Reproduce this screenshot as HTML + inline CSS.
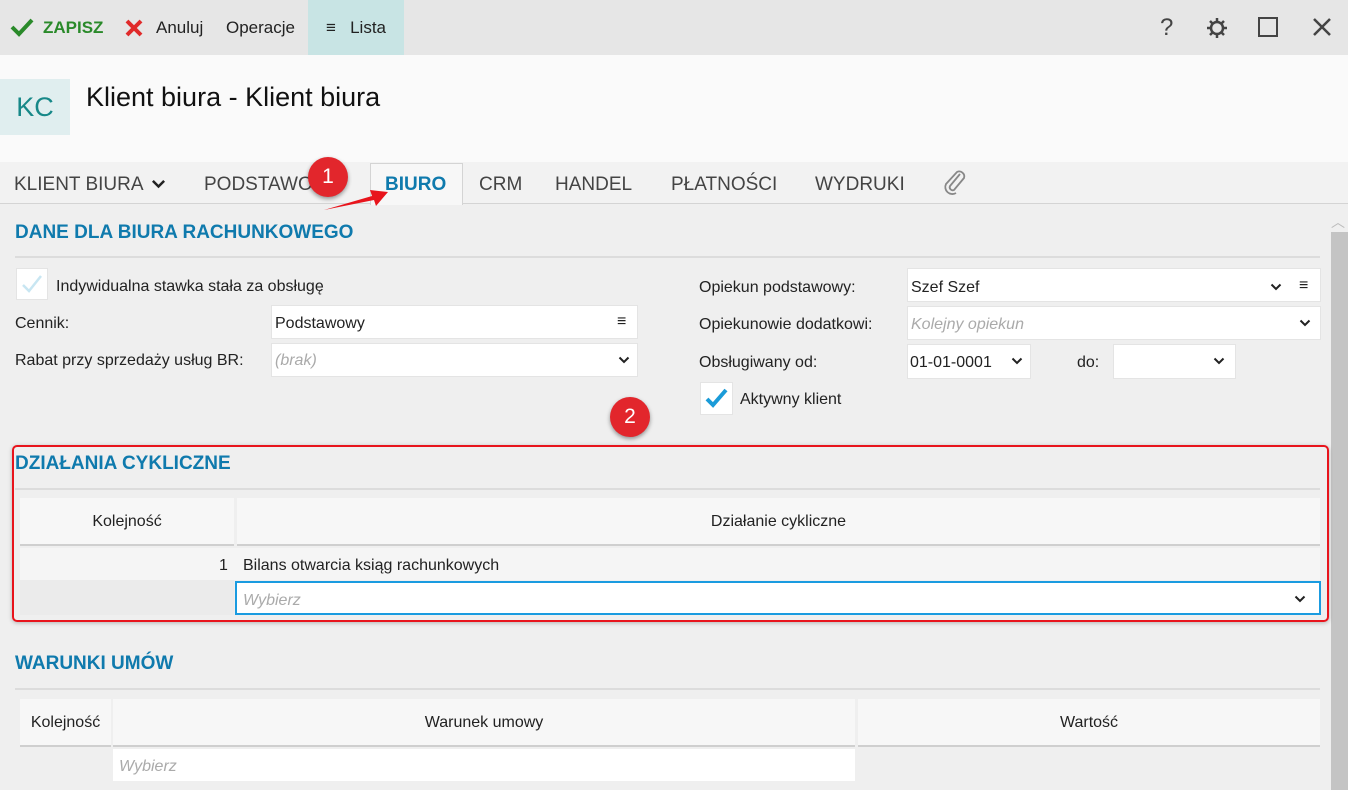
<!DOCTYPE html>
<html><head><meta charset="utf-8"><style>
*{box-sizing:border-box;margin:0;padding:0}
body{width:1348px;height:790px;overflow:hidden;background:#efefef;font-family:"Liberation Sans",sans-serif;font-size:16px;color:#222;position:relative}
.a{position:absolute}
.tb{left:0;top:0;width:1348px;height:55px;background:#e6e6e6}
.hd{left:0;top:55px;width:1348px;height:107px;background:#fafafa}
.tabs{left:0;top:162px;width:1348px;height:42px;background:#f2f2f2;border-bottom:1px solid #d4d4d4}
.tab{top:174px;font-size:19px;color:#444}
.h2{font-size:19px;font-weight:bold;color:#0f7aad;left:15px}
.ln{height:2px;background:#dcdcdc;left:15px}
.in{background:#fff;border:1px solid #e4e4e4}
.ph{color:#aaa;font-style:italic}
.th{background:#f7f7f7;border-bottom:2px solid #cfcfcf;text-align:center;line-height:48px}
.badge{width:40px;height:40px;border-radius:50%;background:#e2262c;color:#fff;text-align:center;line-height:40px;font-size:21px;box-shadow:0 2px 4px rgba(0,0,0,.4)}
</style></head><body>
<svg width="0" height="0" style="position:absolute"><defs><symbol id="cv" viewBox="0 0 12 8"><path d="M1.5 1.5L6 6l4.5-4.5" stroke="#222" stroke-width="2" fill="none"/></symbol></defs></svg>
<div class="a tb"></div>
<svg class="a" style="left:10px;top:17px" width="24" height="20"><path d="M2 10l7 7L22 3" stroke="#2a8a2a" stroke-width="4" fill="none"/></svg>
<div class="a" style="left:43px;top:18px;color:#2a8a2a;font-weight:bold;font-size:17px">ZAPISZ</div>
<svg class="a" style="left:124px;top:18px" width="20" height="20"><path d="M3 3l14 14M17 3L3 17" stroke="#e02a2a" stroke-width="4"/></svg>
<div class="a" style="left:156px;top:18px;font-size:17px">Anuluj</div>
<div class="a" style="left:226px;top:18px;font-size:17px">Operacje</div>
<div class="a" style="left:308px;top:0;width:96px;height:55px;background:#c8e4e4"></div>
<div class="a" style="left:326px;top:18px;font-size:17px">≡&nbsp;&nbsp;&nbsp;Lista</div>
<div class="a" style="left:1160px;top:14px;font-size:24px;color:#444">?</div>
<svg class="a" style="left:1205px;top:16px" width="24" height="24" viewBox="0 0 24 24"><circle cx="12" cy="12" r="6" fill="none" stroke="#444" stroke-width="2.5"/><path d="M12 2v4M12 18v4M2 12h4M18 12h4M5 5l3 3M16 16l3 3M19 5l-3 3M8 16l-3 3" stroke="#444" stroke-width="2.5"/></svg>
<div class="a" style="left:1258px;top:17px;width:20px;height:20px;border:2.5px solid #444"></div>
<svg class="a" style="left:1312px;top:17px" width="20" height="20"><path d="M2 2l16 16M18 2L2 18" stroke="#444" stroke-width="2.5"/></svg>
<div class="a hd"></div>
<div class="a" style="left:0;top:79px;width:70px;height:56px;background:#e0eeef;color:#178888;font-size:27px;text-align:center;line-height:56px">KC</div>
<div class="a" style="left:86px;top:82px;font-size:27px;color:#111">Klient biura - Klient biura</div>
<div class="a tabs"></div>
<div class="a" style="left:370px;top:163px;width:93px;height:42px;background:#f7f7f7;border:1px solid #d4d4d4;border-bottom:none"></div>
<div class="a tab" style="left:14px">KLIENT BIURA</div>
<svg class="a" style="left:151px;top:179px" width="15" height="10"><use href="#cv"/></svg>
<div class="a tab" style="left:204px">PODSTAWOWE</div>
<div class="a tab" style="left:385px;color:#0f7aad;font-weight:bold">BIURO</div>
<div class="a tab" style="left:479px">CRM</div>
<div class="a tab" style="left:555px">HANDEL</div>
<div class="a tab" style="left:671px">PŁATNOŚCI</div>
<div class="a tab" style="left:815px">WYDRUKI</div>
<svg class="a" style="left:940px;top:168px" width="28" height="28" viewBox="0 0 28 28"><path d="M20 6l-10 12a3 3 0 0 0 4 4l10-12a5 5 0 0 0-7-6L6 16a7 7 0 0 0 10 9" stroke="#888" stroke-width="1.8" fill="none"/></svg>
<div class="a badge" style="left:308px;top:157px">1</div>
<svg class="a" style="left:320px;top:182px" width="72" height="32"><path d="M4 28L52 14l-2-6 18 2-12 14-2-6z" fill="#e8141c"/></svg>
<div class="a" style="left:1331px;top:212px;color:#bbb;font-size:14px">︿</div>
<div class="a" style="left:1331px;top:232px;width:17px;height:558px;background:#c4c4c4"></div>

<div class="a h2" style="top:222px">DANE DLA BIURA RACHUNKOWEGO</div>
<div class="a ln" style="top:256px;width:1305px"></div>
<div class="a in" style="left:16px;top:268px;width:32px;height:32px"></div>
<svg class="a" style="left:20px;top:272px" width="24" height="24"><path d="M3 13l6 6L21 4" stroke="#c8e6f2" stroke-width="2.5" fill="none"/></svg>
<div class="a" style="left:56px;top:278px">Indywidualna stawka stała za obsługę</div>
<div class="a" style="left:15px;top:315px">Cennik:</div>
<div class="a in" style="left:271px;top:305px;width:367px;height:34px"></div>
<div class="a" style="left:275px;top:315px">Podstawowy</div>
<div class="a" style="left:617px;top:313px">≡</div>
<div class="a" style="left:15px;top:352px">Rabat przy sprzedaży usług BR:</div>
<div class="a in" style="left:271px;top:343px;width:367px;height:34px"></div>
<div class="a ph" style="left:275px;top:352px">(brak)</div>
<svg class="a" style="left:618px;top:356px" width="12" height="8"><use href="#cv"/></svg>

<div class="a" style="left:699px;top:279px">Opiekun podstawowy:</div>
<div class="a in" style="left:907px;top:268px;width:414px;height:34px"></div>
<div class="a" style="left:911px;top:279px">Szef Szef</div>
<svg class="a" style="left:1270px;top:283px" width="12" height="8"><use href="#cv"/></svg>
<div class="a" style="left:1299px;top:277px">≡</div>
<div class="a" style="left:699px;top:316px">Opiekunowie dodatkowi:</div>
<div class="a in" style="left:907px;top:306px;width:414px;height:34px"></div>
<div class="a ph" style="left:911px;top:316px">Kolejny opiekun</div>
<svg class="a" style="left:1299px;top:319px" width="12" height="8"><use href="#cv"/></svg>
<div class="a" style="left:699px;top:354px">Obsługiwany od:</div>
<div class="a in" style="left:907px;top:344px;width:124px;height:35px"></div>
<div class="a" style="left:910px;top:354px">01-01-0001</div>
<svg class="a" style="left:1011px;top:357px" width="12" height="8"><use href="#cv"/></svg>
<div class="a" style="left:1077px;top:354px">do:</div>
<div class="a in" style="left:1113px;top:344px;width:123px;height:35px"></div>
<svg class="a" style="left:1213px;top:357px" width="12" height="8"><use href="#cv"/></svg>
<div class="a in" style="left:700px;top:382px;width:33px;height:33px"></div>
<svg class="a" style="left:704px;top:386px" width="26" height="24"><path d="M3 13l6 6L22 4" stroke="#1a9bd8" stroke-width="4" fill="none"/></svg>
<div class="a" style="left:740px;top:391px">Aktywny klient</div>
<div class="a badge" style="left:610px;top:397px">2</div>

<div class="a" style="left:12px;top:445px;width:1317px;height:177px;border:2px solid #e8141c;border-radius:5px;box-shadow:0 1px 4px rgba(0,0,0,.25)"></div>
<div class="a h2" style="top:453px">DZIAŁANIA CYKLICZNE</div>
<div class="a ln" style="top:488px;width:1305px"></div>
<div class="a th" style="left:20px;top:498px;width:214px;height:48px">Kolejność</div>
<div class="a th" style="left:237px;top:498px;width:1083px;height:48px">Działanie cykliczne</div>
<div class="a" style="left:20px;top:548px;width:1300px;height:32px;background:#f5f5f5"></div>
<div class="a" style="left:20px;top:580px;width:214px;height:35px;background:#ebebeb"></div>
<div class="a" style="left:219px;top:557px">1</div>
<div class="a" style="left:243px;top:557px">Bilans otwarcia ksiąg rachunkowych</div>
<div class="a" style="left:235px;top:581px;width:1086px;height:34px;background:#fff;border:2px solid #1a9be0"></div>
<div class="a ph" style="left:243px;top:592px">Wybierz</div>
<svg class="a" style="left:1294px;top:595px" width="12" height="8"><use href="#cv"/></svg>

<div class="a h2" style="top:653px">WARUNKI UMÓW</div>
<div class="a ln" style="top:688px;width:1305px"></div>
<div class="a th" style="left:20px;top:699px;width:91px;height:48px">Kolejność</div>
<div class="a th" style="left:113px;top:699px;width:742px;height:48px">Warunek umowy</div>
<div class="a th" style="left:858px;top:699px;width:462px;height:48px">Wartość</div>
<div class="a" style="left:113px;top:749px;width:742px;height:32px;background:#fff"></div>
<div class="a ph" style="left:119px;top:758px">Wybierz</div>
</body></html>
